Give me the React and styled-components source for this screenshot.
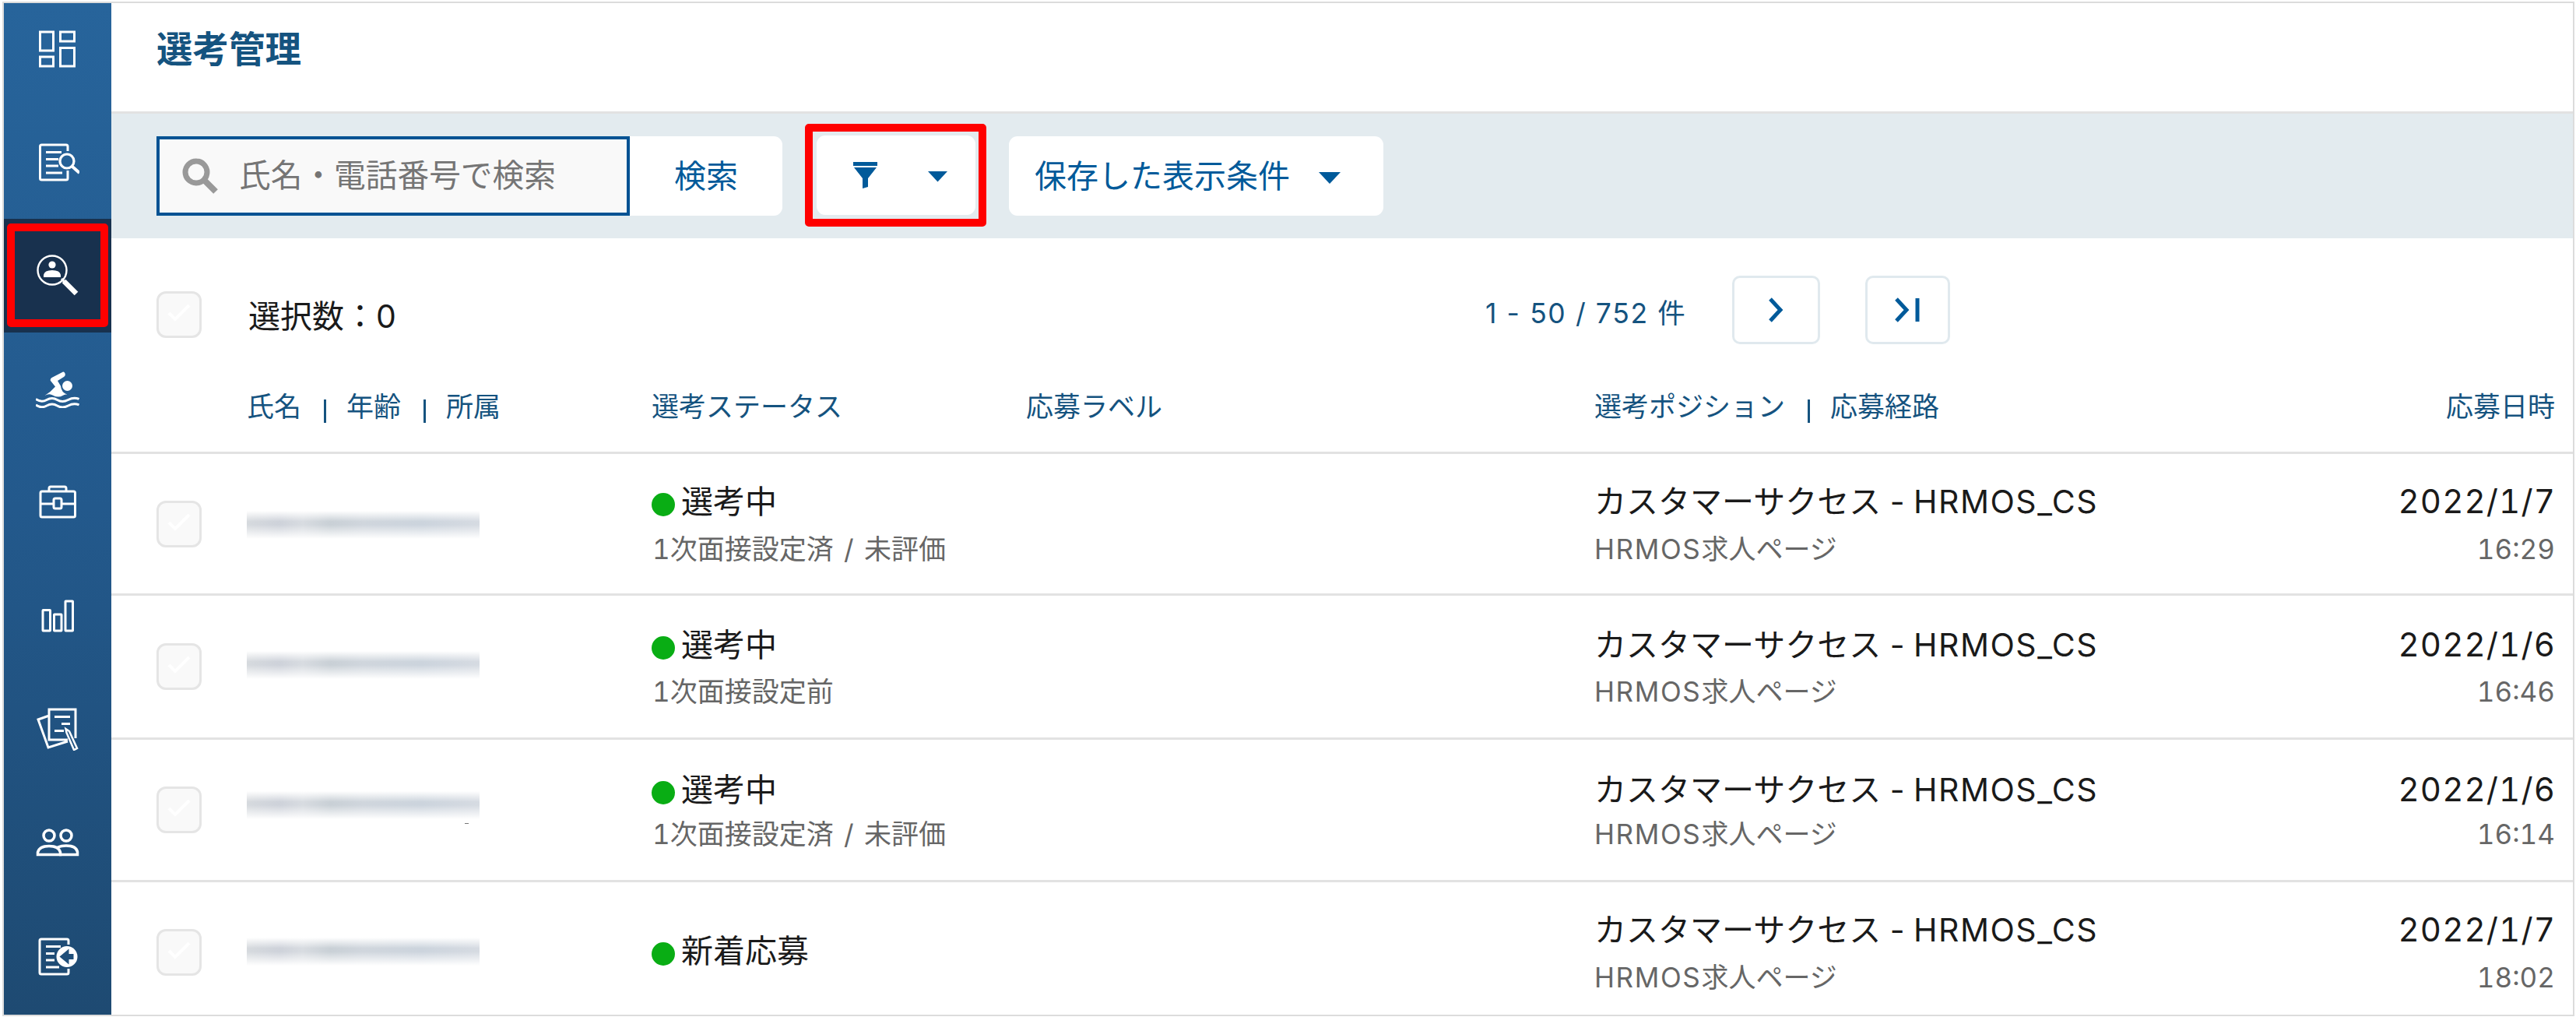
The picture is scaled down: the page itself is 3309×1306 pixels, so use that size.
import React from 'react';
import styled, { createGlobalStyle } from 'styled-components';

const GlobalStyle = createGlobalStyle`
    * { box-sizing: border-box; }

    body {
        margin: 0;
        background: #fff;
        color: #1a1a1a;
        font-family: Inter, "Noto Sans CJK JP", sans-serif;
        line-height: 1;
    }
`;

const Frame = styled.div`
    width: 3309px;
    height: 1306px;
    padding: 2px 2px 1px 3px;
`;

const Window = styled.div`
    height: 1303px;
    border: 2px solid #dcdcdc;

    display: flex;
    overflow: hidden;
`;

const Sidebar = styled.nav`
    width: 138px;
    flex: none;
    background: linear-gradient(#27649b, #23598c 50%, #1e4a72);
    overflow: hidden;
`;

const NavList = styled.div`
    margin-top: -14px;
`;

const NavItem = styled.div`
    height: 145.6px;
    background: ${({ $active }) => ($active ? '#18314e' : 'transparent')};

    display: flex;
    align-items: center;
    justify-content: center;

    svg { display: block; }
`;

const NavHighlight = styled.div`
    width: 130px;
    height: 133px;
    border: 10px solid #f00;
    border-radius: 5px;

    display: flex;
    align-items: center;
    justify-content: center;
`;

const Main = styled.main`
    flex: 1;
    min-width: 0;
`;

const Header = styled.header`
    height: 142px;
    padding: 34px 58px 0;
    border-bottom: 3px solid #e2e2e2;
`;

const Title = styled.h1`
    margin: 0;
    color: #15537f;
    font-size: 46.5px;
    font-weight: bold;
    line-height: 50px;
`;

const Toolbar = styled.div`
    height: 160px;
    padding: 13px 58px;
    background: #e3ebef;

    display: flex;
    align-items: flex-start;
`;

const SearchBox = styled.div`
    width: 608px;
    height: 102px;
    margin-top: 16px;
    padding-left: 29px;
    border: 4px solid #005293;
    background: #f9f9f9;
    color: #757575;
    font-size: 40.7px;

    display: flex;
    align-items: center;
    gap: 26px;
`;

const Button = styled.button`
    height: 102px;
    width: ${({ $width }) => $width}px;
    margin: ${({ $margin }) => $margin || '0'};
    padding: 0 0 0 ${({ $indent }) => $indent || 0}px;
    border: 0;
    border-radius: ${({ $joined }) => ($joined ? '0 11px 11px 0' : '11px')};
    background: #fff;
    color: #005a9a;
    font: inherit;
    font-size: 41px;

    display: flex;
    align-items: center;
    justify-content: ${({ $indent }) => ($indent ? 'flex-start' : 'center')};
`;

const FilterHighlight = styled.div`
    width: 233px;
    height: 132px;
    margin-left: 29px;
    border: 10px solid #f00;
    border-radius: 5px;

    display: flex;
    align-items: center;
    justify-content: center;
`;

const Caret = styled.svg`
    width: ${({ $size }) => $size}px;
    margin-left: ${({ $gap }) => $gap}px;
    margin-top: 4px;
    fill: #005a9a;
`;

const ListHeader = styled.div`
    height: 175px;
    padding: 48px 58px 0;

    display: flex;
    align-items: flex-start;
`;

const CheckboxBox = styled.div`
    width: 58px;
    height: 60px;
    margin-top: ${({ $top }) => $top || 0}px;
    border: 3px solid #e5e5e5;
    border-radius: 12px;
    background: #f9f9f9;
    flex: none;

    display: flex;
    align-items: center;
    justify-content: center;
`;

const SelectedCount = styled.div`
    width: 1589px;
    margin: 30px 0 0 60px;
    font-size: 41px;
    line-height: 44px;
`;

const PageCount = styled.div`
    width: 317px;
    margin-top: 29px;
    color: #15537f;
    font-size: 35.5px;
    line-height: 40px;
    letter-spacing: 1.6px;
    white-space: nowrap;
`;

const PageButton = styled.button`
    width: ${({ $width }) => $width}px;
    height: 88px;
    margin-right: 58px;
    padding: 0;
    border: 3px solid #e0e9ee;
    border-radius: 10px;
    background: #fff;

    display: flex;
    align-items: center;
    justify-content: center;

    path {
        fill: none;
        stroke: #005a9a;
        stroke-width: 5;
    }
`;

const grid = `
    display: grid;
    grid-template-columns: 116px 520px 481px 730px 940px 294px;
    padding: 0 18px 0 58px;
`;

const ColumnHeader = styled.div`
    ${grid}
    height: 102px;
    padding-top: 21px;
    border-bottom: 3px solid #e2e2e2;
    color: #15537f;
    font-size: 35px;
    line-height: 40px;
`;

const Labels = styled.div`
    display: flex;
    justify-content: ${({ $right }) => ($right ? 'flex-end' : 'flex-start')};
`;

const Divider = styled.span`
    width: 3px;
    height: 30px;
    margin: 11px 26px 0 29px;
    background: #15537f;
`;

const Row = styled.div`
    ${grid}
    height: ${({ $height }) => $height}px;
    border-bottom: 3px solid #e2e2e2;
    align-items: center;

    &:last-child { border-bottom: 0; }
`;

const Cell = styled.div`
    text-align: ${({ $right }) => ($right ? 'right' : 'left')};
    white-space: nowrap;
`;

const Primary = styled.div`
    height: 44px;
    margin-top: ${({ $single }) => ($single ? -4 : 2)}px;
    font-size: 41px;
    line-height: 44px;

    display: ${({ $flex }) => ($flex ? 'flex' : 'block')};
    align-items: center;
`;

const Secondary = styled.div`
    margin-top: ${({ $gap }) => $gap}px;
    color: #666;
    font-size: 35px;
    line-height: 40px;
    word-spacing: 4px;
`;

const StatusDetail = styled(Secondary)`
    font-variant-numeric: tabular-nums;
    padding-left: 1px;
`;

const Latin = styled.span`
    letter-spacing: ${({ $spacing }) => $spacing}px;
`;

const DateText = styled(Primary)`
    font-variant-numeric: tabular-nums;
    font-size: 42px;
    letter-spacing: 1.1px;
    margin-right: -1px;
`;

const TimeText = styled(Secondary)`
    font-variant-numeric: tabular-nums;
`;

const Dot = styled.span`
    width: 30px;
    height: 30px;
    margin: 8px 8px 0 0;
    border-radius: 50%;
    background: #09ad14;
`;

const MaskedName = styled.div`
    position: relative;
    top: ${({ $shift }) => $shift}px;
    width: 299px;
    height: 36px;
    background:
        linear-gradient(#fff, rgba(255, 255, 255, 0) 38%, rgba(255, 255, 255, 0) 50%, #fff),
        linear-gradient(90deg, #d6dade, #ced2da 14%, #d8dce1 24%, #c9d0d6 36%, #d0d6dd 50%, #ccd4dd 75%, #d6dbe2);
`;

const Speck = styled.span`
    position: absolute;
    left: 280px;
    top: 41px;
    width: 5px;
    height: 1px;
    background: #777;
`;

const strokeProps = { fill: 'none', stroke: '#fff', strokeWidth: 3 };

const DashboardIcon = () => (
    <svg width="54" height="54" viewBox="0 0 54 54" {...strokeProps}>
        <rect x="4.500" y="5" width="17" height="24" />
        <rect x="30.500" y="5" width="18" height="12" />
        <rect x="4.500" y="37" width="17" height="12" />
        <rect x="30.500" y="25.500" width="18" height="23.500" />
    </svg>
);

const DocumentSearchIcon = () => (
    <svg width="56" height="54" viewBox="0 0 56 54" {...strokeProps}>
        <path d="M41 13V7q0-2-2-2H7.500q-2 0-2 2v41q0 2 2 2H39q2 0 2-2V38" />
        <path d="M13 14.500h20M13 23.500h16M13 32h16M13 41h21" />
        <circle cx="40" cy="26" r="9" strokeWidth="3.200" />
        <path d="M47 33l9 8" strokeWidth="4" />
    </svg>
);

const PersonSearchIcon = () => (
    <svg width="56" height="56" viewBox="0 0 56 56">
        <circle cx="21" cy="21" r="18.500" fill="none" stroke="#fff" strokeWidth="2.400" />
        <circle cx="21" cy="14" r="4.600" fill="#fff" />
        <path d="M10 30v-3q1-6 11-6t11 6v3z" fill="#fff" />
        <path d="M36 35l16 16" stroke="#fff" strokeWidth="6.500" />
        <path d="M33 32l5 5" stroke="#fff" strokeWidth="3" />
    </svg>
);

const SwimmerIcon = () => (
    <svg width="56" height="48" viewBox="0 0 56 48">
        <circle cx="40.500" cy="19.500" r="6.500" fill="#fff" />
        <path
            d="M35 1.500L20.500 9q-2.500 1.500-1.500 4l6 7.500q-6 7-13.500 11.500 5-3 9-1 8 4.500 14 1 3-2.200 6-1.200-8-3-8.500-11L28 13l8-5q2.500-1.500 1.500-4.500-1-2.500-2.500-2z"
            fill="#fff"
        />
        <path d="M0 36.500q7 5 14 1t13.500 0 14 0 14-1" {...strokeProps} />
        <path d="M0 44q7 5 14 1t13.500 0 14 0 14-1" {...strokeProps} />
    </svg>
);

const BriefcaseIcon = () => (
    <svg width="50" height="46" viewBox="0 0 50 46" {...strokeProps}>
        <rect x="3" y="9" width="44.500" height="33" rx="2" />
        <path d="M14 9V5q0-2 2-2h18q2 0 2 2v4M3 25h16M31 25h16" />
        <rect x="20" y="18" width="10" height="13" rx="2" />
    </svg>
);

const ChartIcon = () => (
    <svg width="46" height="46" viewBox="0 0 46 46" {...strokeProps}>
        <rect x="4" y="15.500" width="9.500" height="26.500" rx="0.500" />
        <rect x="18.500" y="21" width="9.500" height="21" rx="0.500" />
        <rect x="33" y="4" width="9.500" height="38" rx="0.500" />
    </svg>
);

const DocumentsIcon = () => (
    <svg width="56" height="56" viewBox="0 0 56 56" {...strokeProps}>
        <path d="M51 40V3H17v39h24M17 11L3 16l13 36 25-8" />
        <path d="M24 12.500h20M33 21.500h11M24 30.500h12" />
        <path d="M38.500 28l4.500 3 10 22-4 2-9.500-22z" strokeWidth="2.500" />
    </svg>
);

const PeopleIcon = () => (
    <svg width="56" height="38" viewBox="0 0 56 38" fill="none" stroke="#fff" strokeWidth="3.500">
        <circle cx="17" cy="10" r="7" />
        <circle cx="39" cy="10" r="7" />
        <path d="M2.500 34.500v-3q2-8 14.500-8t14.500 8v3z" />
        <path d="M28 25q5-2 11-2 13 0 14.500 8v3.500H30" />
    </svg>
);

const DocumentBackIcon = () => (
    <svg width="54" height="54" viewBox="0 0 54 54" {...strokeProps}>
        <path d="M41 12V7q0-2-2-2H6q-2 0-2 2v41q0 2 2 2H39q2 0 2-2v-5" />
        <path d="M12 14.500h19M12 23.500h11M12 32h11M12 41h17" />
        <circle cx="39" cy="27.500" r="13.500" fill="#fff" stroke="none" />
        <path d="M29.500 27.500l12-10v6.500h6v7h-6v6.500z" fill="#1f4e79" stroke="none" />
    </svg>
);

const icons = [
    DashboardIcon,
    DocumentSearchIcon,
    PersonSearchIcon,
    SwimmerIcon,
    BriefcaseIcon,
    ChartIcon,
    DocumentsIcon,
    PeopleIcon,
    DocumentBackIcon,
];

const Checkbox = ({ top }) => (
    <CheckboxBox $top={top}>
        <svg width="32" height="26" viewBox="0 0 32 26">
            <path d="M3 11l8 8L29 1" fill="none" stroke="#fff" strokeWidth="4" />
        </svg>
    </CheckboxBox>
);

const Triangle = ({ size, gap }) => (
    <Caret $size={size} $gap={gap} viewBox="0 0 28 15">
        <path d="M0 0h28L14 15z" />
    </Caret>
);

const rows = [
    { status: '選考中', detail: '1次面接設定済 / 未評価', date: '2022/1/7', time: '16:29', height: 182, gap: 19, shift: 1 },
    { status: '選考中', detail: '1次面接設定前', date: '2022/1/6', time: '16:46', height: 185, gap: 18, shift: -2 },
    { status: '選考中', detail: '1次面接設定済 / 未評価', date: '2022/1/6', time: '16:14', height: 183, gap: 15, shift: -6, speck: true },
    { status: '新着応募', date: '2022/1/7', time: '18:02', height: 179, gap: 19, shift: -1 },
];

export default () => (
    <Frame>
        <GlobalStyle />
        <Window>
            <Sidebar>
                <NavList>
                    {icons.map((Icon, i) => (
                        <NavItem key={i} $active={i === 2}>
                            {i === 2 ? <NavHighlight><Icon /></NavHighlight> : <Icon />}
                        </NavItem>
                    ))}
                </NavList>
            </Sidebar>

            <Main>
                <Header>
                    <Title>選考管理</Title>
                </Header>

                <Toolbar>
                    <SearchBox>
                        <svg width="47" height="47" viewBox="0 0 47 47" fill="none" stroke="#999">
                            <circle cx="18" cy="18" r="14" strokeWidth="7" />
                            <path d="M27 27l16 16" strokeWidth="8" />
                        </svg>
                        氏名・電話番号で検索
                    </SearchBox>
                    <Button $width={196} $joined $margin="16px 0 0">検索</Button>
                    <FilterHighlight>
                        <Button $width={204} $indent={47}>
                            <svg width="31" height="34" viewBox="0 0 31 34" fill="#005a9a">
                                <path d="M0 0h31v5H0zM1 7h29L19 21v11l-7 2V21z" />
                            </svg>
                            <Triangle size={25} gap={65} />
                        </Button>
                    </FilterHighlight>
                    <Button $width={481} $indent={33} $margin="16px 0 0 29px">
                        保存した表示条件
                        <Triangle size={28} gap={37} />
                    </Button>
                </Toolbar>

                <ListHeader>
                    <Checkbox top={20} />
                    <SelectedCount>選択数：0</SelectedCount>
                    <PageCount>1 - 50 / 752 件</PageCount>
                    <PageButton $width={113}>
                        <svg width="20" height="32" viewBox="0 0 20 32">
                            <path d="M2 2l13 14L2 30" />
                        </svg>
                    </PageButton>
                    <PageButton $width={109}>
                        <svg width="34" height="32" viewBox="0 0 34 32">
                            <path d="M2 2l13 14L2 30M29 1v30" />
                        </svg>
                    </PageButton>
                </ListHeader>

                <ColumnHeader>
                    <span />
                    <Labels>氏名<Divider />年齢<Divider />所属</Labels>
                    <Labels>選考ステータス</Labels>
                    <Labels>応募ラベル</Labels>
                    <Labels>選考ポジション<Divider />応募経路</Labels>
                    <Labels $right>応募日時</Labels>
                </ColumnHeader>

                {rows.map((row, i) => (
                    <Row key={i} $height={row.height}>
                        <Checkbox />
                        <MaskedName $shift={row.shift}>
                            {row.speck && <Speck />}
                        </MaskedName>
                        <Cell>
                            <Primary $flex $single={!row.detail}><Dot />{row.status}</Primary>
                            {row.detail && <StatusDetail $gap={row.gap}>{row.detail}</StatusDetail>}
                        </Cell>
                        <span />
                        <Cell>
                            <Primary>カスタマーサクセス - <Latin $spacing={1.5}>HRMOS_CS</Latin></Primary>
                            <Secondary $gap={row.gap}><Latin $spacing={1.6}>HRMOS</Latin>求人ページ</Secondary>
                        </Cell>
                        <Cell $right>
                            <DateText>{row.date}</DateText>
                            <TimeText $gap={row.gap}>{row.time}</TimeText>
                        </Cell>
                    </Row>
                ))}
            </Main>
        </Window>
    </Frame>
);
